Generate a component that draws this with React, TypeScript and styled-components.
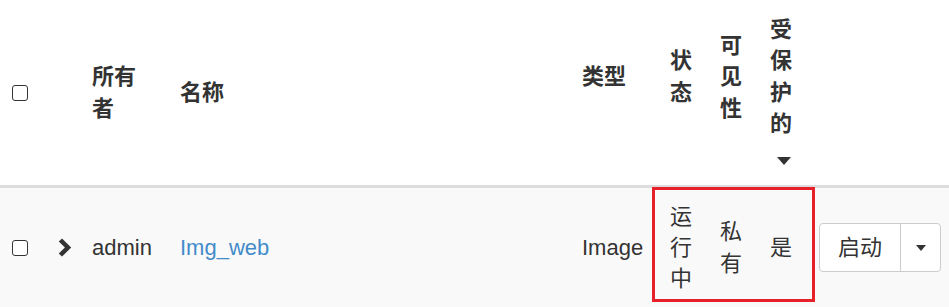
import React from "react";
import styled, { createGlobalStyle } from "styled-components";

const GlobalStyle = createGlobalStyle`
  html, body {
    margin: 0;
    padding: 0;
    background: #fff;
  }
  body {
    font-family: "Liberation Sans", Arial, "Noto Sans CJK SC", sans-serif;
    font-size: 22px;
    line-height: 1.42857;
    color: #333;
  }
`;

const columns = "44px 34px 88px 1fr 88px 50px 50px 50px 143px";

const Table = styled.div`
  width: 949px;
`;

const HeadRow = styled.div`
  display: grid;
  grid-template-columns: ${columns};
  align-items: center;
  border-bottom: 3px solid #ddd;
`;

const Th = styled.div`
  padding: 14px;
  font-weight: bold;
`;

const BodyRow = styled.div`
  position: relative;
  display: grid;
  grid-template-columns: ${columns};
  align-items: center;
  background: #f9f9f9;
`;

const Td = styled.div`
  padding: 12.5px 14px;
`;

const ActionCell = styled.div`
  display: flex;
  align-items: center;
  padding: 0 0 0 13px;
`;

const CheckCell = styled.div`
  display: flex;
  align-items: center;
  padding: 0 0 0 12px;
`;

const ToggleCell = styled.div`
  display: flex;
  align-items: center;
  padding: 0 0 0 14px;
`;

const Box = styled.span`
  display: block;
  width: 16px;
  height: 16px;
  box-sizing: border-box;
  border: 1.6px solid #333;
  border-radius: 3px;
  background: #fff;
`;

const SortCaret = styled.div<{ $visible?: boolean }>`
  height: 1.42857em;
  box-sizing: border-box;
  padding: 17px 0 0 7px;
  visibility: ${(p) => (p.$visible ? "visible" : "hidden")};

  &::before {
    content: "";
    display: block;
    width: 0;
    height: 0;
    border-left: 7px solid transparent;
    border-right: 7px solid transparent;
    border-top: 8px solid #333;
  }
`;

const NameLink = styled.a`
  color: #428bca;
  text-decoration: none;
  cursor: pointer;
`;

const ButtonGroup = styled.div`
  display: flex;
  flex-shrink: 0;
  align-items: stretch;
  border: 1px solid #ccc;
  border-radius: 4px;
  background: #fff;
  white-space: nowrap;
`;

const MainButton = styled.button`
  font: inherit;
  color: #333;
  background: transparent;
  border: none;
  border-right: 1px solid #ccc;
  padding: 8px 18px;
  margin: 0;
  white-space: nowrap;
  cursor: pointer;
`;

const CaretButton = styled.button`
  width: 39px;
  display: flex;
  align-items: center;
  justify-content: center;
  background: transparent;
  border: none;
  padding: 0;
  margin: 0;
  cursor: pointer;

  &::before {
    content: "";
    display: block;
    width: 0;
    height: 0;
    border-left: 5.5px solid transparent;
    border-right: 5.5px solid transparent;
    border-top: 6px solid #333;
  }
`;

const Highlight = styled.div`
  position: absolute;
  left: 652px;
  top: -1px;
  width: 163px;
  height: 115px;
  box-sizing: border-box;
  border: 3px solid #e8202a;
  pointer-events: none;
`;

const Chevron = () => (
  <svg width="14" height="19" viewBox="0 0 14 19">
    <path d="M0.8 3.4 L4 0.4 L13.2 9.5 L4 18.6 L0.8 15.6 L6.9 9.5 Z" fill="#333" />
  </svg>
);

const App = () => (
  <>
    <GlobalStyle />
    <Table>
      <HeadRow>
        <CheckCell>
          <Box />
        </CheckCell>
        <Th />
        <Th>所有者</Th>
        <Th>名称</Th>
        <Th>
          类型
          <SortCaret />
        </Th>
        <Th>
          状态
          <SortCaret />
        </Th>
        <Th>
          可见性
          <SortCaret />
        </Th>
        <Th>
          受保护的
          <SortCaret $visible />
        </Th>
        <Th />
      </HeadRow>
      <BodyRow>
        <CheckCell>
          <Box />
        </CheckCell>
        <ToggleCell>
          <Chevron />
        </ToggleCell>
        <Td>admin</Td>
        <Td>
          <NameLink>Img_web</NameLink>
        </Td>
        <Td>Image</Td>
        <Td>运行中</Td>
        <Td>私有</Td>
        <Td>是</Td>
        <ActionCell>
          <ButtonGroup>
            <MainButton>启动</MainButton>
            <CaretButton aria-label="更多" />
          </ButtonGroup>
        </ActionCell>
        <Highlight />
      </BodyRow>
    </Table>
  </>
);

export default App;
